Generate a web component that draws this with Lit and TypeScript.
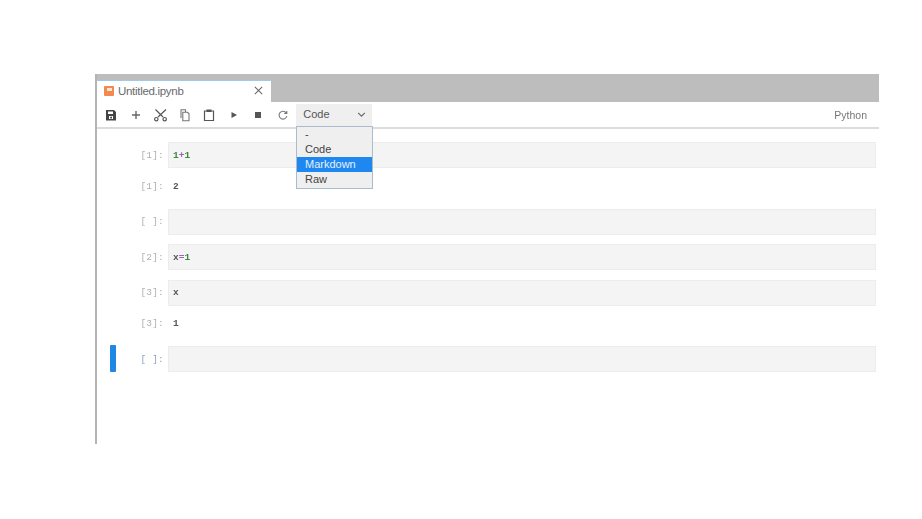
import { LitElement, html, css, svg } from "lit";
import { customElement } from "lit/decorators.js";

const icons = [
  svg`<path fill="#444" fill-rule="evenodd" d="M1 1h8l2 2v8.500H1zM3 2.500v2.500h5V2.500zM4 7h4v3H4z"/><rect x="5.200" y="7.700" width="1.800" height="1.800" fill="#444"/>`,
  svg`<path stroke="#666" stroke-width="1.400" fill="none" d="M6 2v8M2 6h8"/>`,
  svg`<g stroke="#555" stroke-width="1.200" fill="none"><path d="M1.500 0.500L9 8M12 0.500L4 8"/><circle cx="2.300" cy="10.200" r="1.700"/><circle cx="10.700" cy="10.200" r="1.700"/></g>`,
  svg`<path stroke="#777" stroke-width="1.100" fill="none" d="M2 9V.8h4.500V3M3.800 3.300h4.700l1.500 1.500v7H3.800z"/>`,
  svg`<path fill="none" stroke="#555" stroke-width="1.200" d="M1.500 2h9v9.500h-9z"/><rect x="3.500" y=".5" width="5" height="2.500" fill="#555"/>`,
  svg`<path fill="#555" d="M3.500 3l5.500 3-5.500 3z"/>`,
  svg`<rect x="3" y="3" width="6" height="6" fill="#555"/>`,
  svg`<path fill="none" stroke="#777" stroke-width="1.100" d="M9.200 4A3.900 3.900 0 1 0 9.800 7M9.800 2v2.500H7.300"/>`,
];

type Row =
  | { kind: "in"; n: string; code?: unknown; active?: boolean }
  | { kind: "out"; n: string; text: string };

const rows: Row[] = [
  { kind: "in", n: "[1]:", code: html`<b class="num">1</b><b class="op">+</b><b class="num">1</b>` },
  { kind: "out", n: "[1]:", text: "2" },
  { kind: "in", n: "[ ]:" },
  { kind: "in", n: "[2]:", code: html`<span class="var">x</span><b class="op">=</b><b class="num">1</b>` },
  { kind: "in", n: "[3]:", code: html`<span class="var">x</span>` },
  { kind: "out", n: "[3]:", text: "1" },
  { kind: "in", n: "[ ]:", active: true },
];

@customElement("app-root")
export class AppRoot extends LitElement {
  static styles = css`
    :host { display: block; width: 922px; height: 519px; padding: 74px 0 0 95px; box-sizing: border-box; background: #fff; overflow: hidden; font-family: "Liberation Sans", Arial, sans-serif; }
    .frame { position: relative; width: 784px; height: 370px; box-sizing: border-box; border-left: 2px solid #b4b4b4; filter: blur(0.5px); }
    .tabbar { height: 28px; background: #bdbdbd; display: flex; align-items: flex-end; }
    .tab { width: 174px; height: 22px; box-sizing: border-box; background: #fff; border-top: 1.500px solid #9ccbee; display: flex; align-items: center; padding: 0 7px 2px 7px; gap: 4px; font-size: 11.500px; color: #6a6a6a; letter-spacing: -0.3px; }
    .tabicon { width: 10px; height: 10px; background: #f08a50; border-radius: 1px; display: flex; justify-content: center; padding-top: 2px; box-sizing: border-box; flex: none; }
    .tabicon i { width: 5px; height: 3px; background: #ffe4d0; display: block; }
    .tabname { flex: 1; }
    .close { width: 11px; height: 11px; flex: none; }
    .toolbar { height: 27px; box-sizing: border-box; border-bottom: 2px solid #dcdcdc; display: flex; align-items: center; padding-left: 8px; }
    .tool { width: 12px; height: 12px; margin-right: 12.500px; flex: none; display: block; overflow: visible; }
    .select { width: 76px; height: 22px; margin: 2px 0 0 -4.800px; align-self: flex-start; background: #efefef; display: flex; align-items: center; justify-content: space-between; padding: 0 6px 2px 7px; box-sizing: border-box; font-size: 11px; color: #555; }
    .chev { width: 9px; height: 5px; }
    .kernel { margin-left: auto; margin-right: 12px; font-size: 10.500px; color: #777; }
    .menu { position: absolute; z-index: 2; left: 199px; top: 52px; width: 77px; height: 63px; box-sizing: border-box; background: #efefef; border: 1px solid #a9bbcf; font-size: 11px; color: #444; }
    .menu div { height: 15px; line-height: 15px; padding-left: 8px; }
    .menu .sel { background: #1e88f0; color: #e8f0fa; }
    .cells { padding-top: 13px; display: flex; flex-direction: column; }
    .row { display: flex; position: relative; font-family: "Liberation Mono", monospace; font-size: 9.500px; }
    .prompt { width: 71px; flex: none; box-sizing: border-box; text-align: right; padding-right: 4px; color: #b0b0b0; align-self: center; letter-spacing: 0.2px; }
    .row.active .prompt { color: #8f9fc0; }
    .input { width: 708px; height: 26px; box-sizing: border-box; background: #f4f4f4; border: 1px solid #ececec; display: flex; align-items: center; padding-left: 4px; color: #666; }
    .output { height: 26px; display: flex; align-items: center; padding-left: 5px; color: #555; font-weight: bold; }
    .row.in { margin-bottom: 9.500px; }
    .row.out { height: 26px; margin-top: -4.500px; margin-bottom: 9.500px; }
    .bar { position: absolute; left: 13px; top: -1px; width: 6px; height: 27px; background: #1e88e5; border-radius: 1px; }
    .num { color: #3a8a3a; font-weight: bold; }
    .op { color: #a45ad0; font-weight: bold; }
    .var { color: #555; font-weight: bold; }
  `;

  render() {
    return html`
      <div class="frame">
        <div class="tabbar">
          <div class="tab">
            <span class="tabicon"><i></i></span>
            <span class="tabname">Untitled.ipynb</span>
            <svg class="close" viewBox="0 0 12 12"><path d="M2 2l8 8M10 2l-8 8" stroke="#666" stroke-width="1.100"/></svg>
          </div>
        </div>
        <div class="toolbar">
          ${icons.map((p) => html`<svg class="tool" viewBox="0 0 12 12">${p}</svg>`)}
          <div class="select">
            <span>Code</span>
            <svg class="chev" viewBox="0 0 10 6"><path d="M1 1l4 4 4-4" fill="none" stroke="#666" stroke-width="1.300"/></svg>
          </div>
          <span class="kernel">Python</span>
        </div>
        <div class="menu">
          <div>-</div>
          <div>Code</div>
          <div class="sel">Markdown</div>
          <div>Raw</div>
        </div>
        <div class="cells">
          ${rows.map((r) =>
            r.kind === "out"
              ? html`<div class="row out">
                  <div class="prompt">${r.n}</div>
                  <div class="output">${r.text}</div>
                </div>`
              : html`<div class="row in ${r.active ? "active" : ""}">
                  ${r.active ? html`<span class="bar"></span>` : ""}
                  <div class="prompt">${r.n}</div>
                  <div class="input">${r.code ?? ""}</div>
                </div>`
          )}
        </div>
      </div>
    `;
  }
}
